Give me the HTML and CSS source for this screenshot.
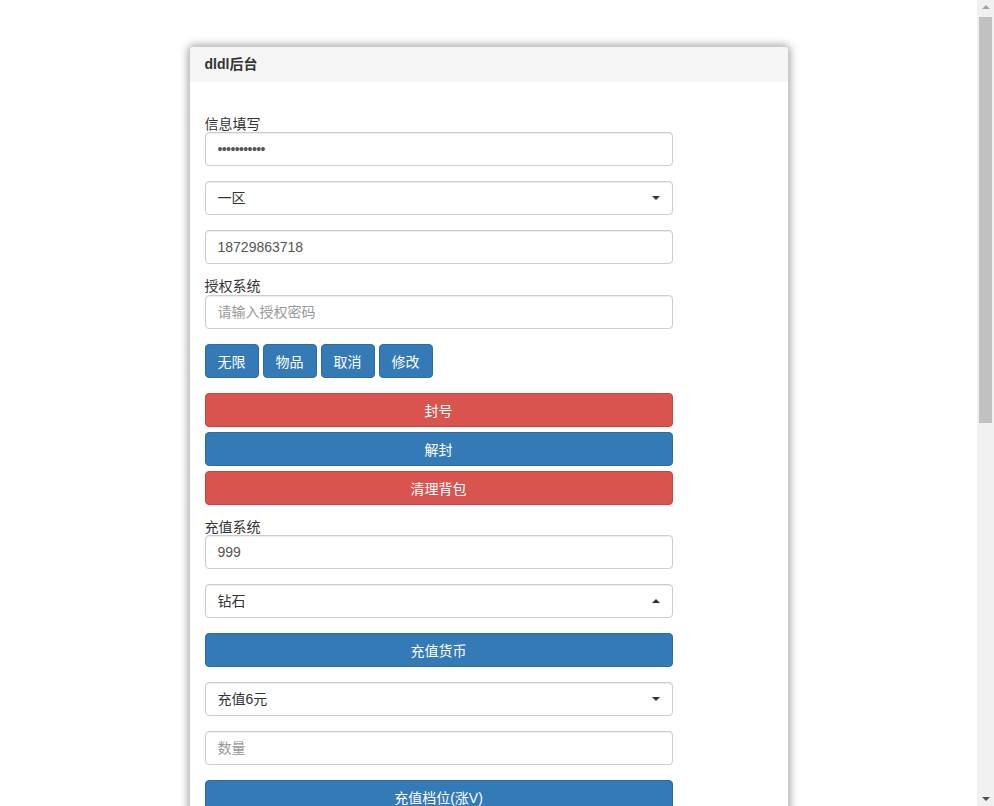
FILE: index.html
```html
<!DOCTYPE html>
<html lang="zh-CN">
<head>
<meta charset="utf-8">
<title>dldl后台</title>
<link rel="stylesheet" href="styles.css">
</head>
<body>
<div class="page">
  <div class="panel">
    <div class="panel-heading">dldl后台</div>
    <div class="panel-body">
      <form class="form">
        <label class="label">信息填写</label>
        <div class="group">
          <input class="control" type="password" value="12345678901">
        </div>
        <div class="group select-wrap">
          <select class="control select"><option>一区</option></select>
        </div>
        <div class="group">
          <input class="control" type="text" value="18729863718">
        </div>
        <label class="label">授权系统</label>
        <div class="group">
          <input class="control" type="text" placeholder="请输入授权密码">
        </div>
        <div class="group btn-row">
          <button type="button" class="btn primary">无限</button>
          <button type="button" class="btn primary">物品</button>
          <button type="button" class="btn primary">取消</button>
          <button type="button" class="btn primary">修改</button>
        </div>
        <div class="group btn-stack">
          <button type="button" class="btn danger block">封号</button>
          <button type="button" class="btn primary block">解封</button>
          <button type="button" class="btn danger block">清理背包</button>
        </div>
        <label class="label">充值系统</label>
        <div class="group">
          <input class="control" type="text" value="999">
        </div>
        <div class="group select-wrap up">
          <select class="control select"><option>钻石</option></select>
        </div>
        <div class="group">
          <button type="button" class="btn primary block">充值货币</button>
        </div>
        <div class="group select-wrap">
          <select class="control select"><option>充值6元</option></select>
        </div>
        <div class="group">
          <input class="control" type="text" placeholder="数量">
        </div>
        <div class="group">
          <button type="button" class="btn primary block">充值档位(涨V)</button>
        </div>
      </form>
    </div>
  </div>
</div>
<div class="scrollbar" aria-hidden="true">
  <div class="sb-arrow sb-up"></div>
  <div class="sb-thumb"></div>
  <div class="sb-arrow sb-down"></div>
</div>
</body>
</html>
```
FILE: styles.css
```css
html, body {
  margin: 0;
  padding: 0;
  background: #fff;
  height: 100%;
  overflow: hidden;
}
body {
  font-family: "Liberation Sans", "Noto Sans CJK SC", sans-serif;
  font-size: 14px;
  color: #333;
}
.page {
  width: 977px;
  padding-top: 46px;
}
.panel {
  width: 598px;
  margin: 0 auto;
  border: 1px solid #ccc;
  border-radius: 4px;
  background: #fff;
  box-shadow: 0 0 10px rgba(0, 0, 0, 0.45);
}
.panel-heading {
  height: 35px;
  line-height: 35px;
  padding: 0 15px;
  background: #f5f5f5;
  font-weight: bold;
  color: #333;
  border-radius: 3px 3px 0 0;
}
.panel-body {
  padding: 34.5px 15px 20px;
}
.form {
  width: 468px;
}
.label {
  display: block;
  height: 15.5px;
  line-height: 14px;
  font-size: 14px;
  color: #333;
}
.group {
  margin-bottom: 15px;
}
.control {
  display: block;
  box-sizing: border-box;
  width: 100%;
  height: 34px;
  margin: 0;
  padding: 0 12px;
  font-family: "Liberation Sans", "Noto Sans CJK SC", sans-serif;
  font-size: 14px;
  color: #555;
  background: #fff;
  border: 1px solid #ccc;
  border-radius: 4px;
  box-shadow: inset 0 1px 1px rgba(0, 0, 0, 0.075);
  outline: none;
}
.control::placeholder {
  color: #999;
}
input[type="password"].control {
  letter-spacing: -0.6px;
}
.select-wrap {
  position: relative;
}
.select {
  -webkit-appearance: none;
  appearance: none;
  color: #333;
  padding-right: 30px;
}
.select-wrap::after {
  content: "";
  position: absolute;
  right: 13px;
  top: 15px;
  width: 0;
  height: 0;
  border-left: 4px solid transparent;
  border-right: 4px solid transparent;
  border-top: 4px solid #333;
}
.select-wrap.up::after {
  border-top: 0;
  border-bottom: 4px solid #333;
}
.btn-row {
  display: flex;
  gap: 4px;
}
.btn-stack {
  display: flex;
  flex-direction: column;
  gap: 5px;
}
.btn {
  box-sizing: border-box;
  height: 34px;
  margin: 0;
  padding: 0 12px;
  font-family: "Liberation Sans", "Noto Sans CJK SC", sans-serif;
  font-size: 14px;
  color: #fff;
  border: 1px solid transparent;
  border-radius: 4px;
  cursor: pointer;
}
.btn.block {
  display: block;
  width: 100%;
}
.primary {
  background: #337ab7;
  border-color: #2e6da4;
}
.danger {
  background: #d9534f;
  border-color: #d43f3a;
}
.scrollbar {
  position: fixed;
  top: 0;
  right: 0;
  width: 17px;
  height: 100%;
  background: #f1f1f1;
}
.sb-thumb {
  position: absolute;
  left: 2px;
  right: 2px;
  top: 17px;
  height: 406px;
  background: #c1c1c1;
}
.sb-arrow {
  position: absolute;
  left: 5px;
  width: 0;
  height: 0;
  border-left: 4px solid transparent;
  border-right: 4px solid transparent;
}
.sb-up {
  top: 5px;
  border-bottom: 4px solid #a3a3a3;
}
.sb-down {
  bottom: 5px;
  border-top: 4px solid #505050;
}
```
